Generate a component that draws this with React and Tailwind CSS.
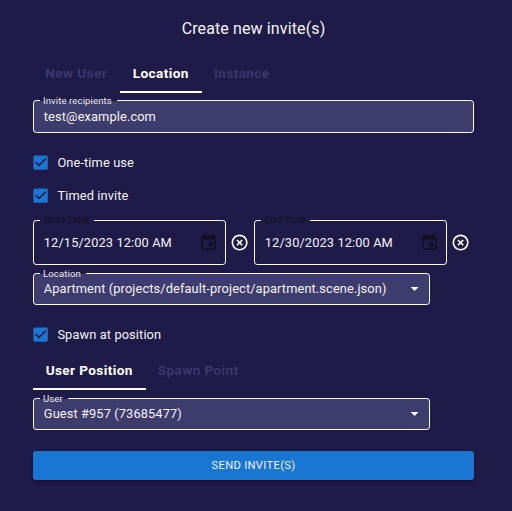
function Notch({ label, gap, dark }) {
  return (
    <>
      <span className={`absolute -top-px left-[6px] h-px bg-[#1f1b48] ${gap}`} />
      <span
        className={`absolute whitespace-nowrap text-[9.6px] leading-3 tracking-[0.09px] ${
          dark ? '-top-[7px] left-[10px] text-[#12101f]' : '-top-[6px] left-[9px] text-[#e9e8ef]'
        }`}
      >
        {label}
      </span>
    </>
  );
}

function Field({ label, value, gap, size, select }) {
  return (
    <div
      className={`relative flex items-center justify-between rounded-[3.2px] border border-white bg-[#3e3c6c] pl-[9.8px] pr-[4.6px] ${size}`}
    >
      <Notch label={label} gap={gap} />
      <span className="whitespace-nowrap text-[12.8px] leading-5 tracking-[0.12px]">{value}</span>
      {select && (
        <svg className="size-[19.2px]" viewBox="0 0 24 24" fill="white">
          <path d="m7 10 5 5 5-5z" />
        </svg>
      )}
    </div>
  );
}

function DateField({ label, value, gap }) {
  return (
    <div className="flex items-center">
      <div className="relative flex h-[45px] w-[193px] items-center justify-between rounded-[3.2px] border border-white pl-[9.8px] pr-[7px]">
        <Notch label={label} gap={gap} dark />
        <span className="whitespace-nowrap text-[12.8px] leading-5 tracking-[0.12px]">{value}</span>
        <svg className="size-[19.2px]" viewBox="0 0 24 24" fill="#12101f">
          <path d="M17 12h-5v5h5v-5zM16 1v2H8V1H6v2H5c-1.11 0-1.99.9-1.99 2L3 19c0 1.1.89 2 2 2h14c1.1 0 2-.9 2-2V5c0-1.1-.9-2-2-2h-1V1h-2zm3 18H5V8h14v11z" />
        </svg>
      </div>
      <div className="flex w-7 pl-1">
        <svg className="size-[19.2px]" viewBox="0 0 24 24" fill="white">
          <path d="M14.59 8 12 10.59 9.41 8 8 9.41 10.59 12 8 14.59 9.41 16 12 13.41 14.59 16 16 14.59 13.41 12 16 9.41 14.59 8zM12 2C6.47 2 2 6.47 2 12s4.47 10 10 10 10-4.47 10-10S17.53 2 12 2zm0 18c-4.41 0-8-3.59-8-8s3.59-8 8-8 8 3.59 8 8-3.59 8-8 8z" />
        </svg>
      </div>
    </div>
  );
}

function Check({ label, margin }) {
  return (
    <div className={`flex h-5 items-center ${margin}`}>
      <svg className="-ml-[2.4px] size-[19.2px]" viewBox="0 0 24 24" fill="#1976d2">
        <path d="M19 3H5c-1.11 0-2 .9-2 2v14c0 1.1.89 2 2 2h14c1.11 0 2-.9 2-2V5c0-1.1-.89-2-2-2zm-9 14l-5-5 1.41-1.41L10 14.17l7.59-7.59L19 8l-9 9z" />
      </svg>
      <span className="ml-[7.6px] whitespace-nowrap text-[12.8px] leading-5 tracking-[0.12px]">{label}</span>
    </div>
  );
}

function Tab({ label, active, width }) {
  return (
    <div
      className={`flex h-10 items-center justify-center whitespace-nowrap border-b-2 pr-[0.6px] pt-[3px] text-[13.6px] font-bold tracking-[0.39px] ${width} ${
        active ? 'border-white text-white' : 'border-transparent text-[#3b386a]'
      }`}
    >
      {label}
    </div>
  );
}

export default function App() {
  return (
    <div className="h-[511px] w-[512px] overflow-hidden bg-[#1f1b48] pl-[33px] pr-[38px] pt-[19px] font-[Roboto,sans-serif] text-[#f4f3f7]">
      <h1 className="h-5 text-center text-[16px] leading-5 tracking-[0.12px]">Create new invite(s)</h1>
      <div className="mt-[14px] flex">
        <Tab label="New User" width="w-[87px]" />
        <Tab label="Location" width="w-[82px]" active />
        <Tab label="Instance" width="w-[80px]" />
      </div>
      <div className="mt-[7px]">
        <Field label="Invite recipients" value="test@example.com" gap="w-[77px]" size="h-[33px] w-[441px]" />
      </div>
      <Check label="One-time use" margin="mt-5" />
      <Check label="Timed invite" margin="mt-[13px]" />
      <div className="mt-[14px] flex">
        <DateField label="Start Time" value="12/15/2023 12:00 AM" gap="w-[54px]" />
        <DateField label="End Time" value="12/30/2023 12:00 AM" gap="w-[49px]" />
      </div>
      <div className="mt-2">
        <Field
          label="Location"
          value="Apartment (projects/default-project/apartment.scene.json)"
          gap="w-[46px]"
          size="h-8 w-[397px]"
          select
        />
      </div>
      <Check label="Spawn at position" margin="mt-5" />
      <div className="mt-[5px] flex">
        <Tab label="User Position" width="w-[113px]" active />
        <Tab label="Spawn Point" width="w-[105px]" />
      </div>
      <div className="mt-2">
        <Field label="User" value="Guest #957 (73685477)" gap="w-[28px]" size="h-8 w-[397px]" select />
      </div>
      <button className="mt-[21px] flex h-[29px] w-[441px] items-center justify-center rounded-[3px] bg-[#1976d2] pt-px text-[11.2px] tracking-[0.32px] shadow-[0_2px_3px_rgba(0,0,0,0.35)]">
        SEND INVITE(S)
      </button>
    </div>
  );
}
